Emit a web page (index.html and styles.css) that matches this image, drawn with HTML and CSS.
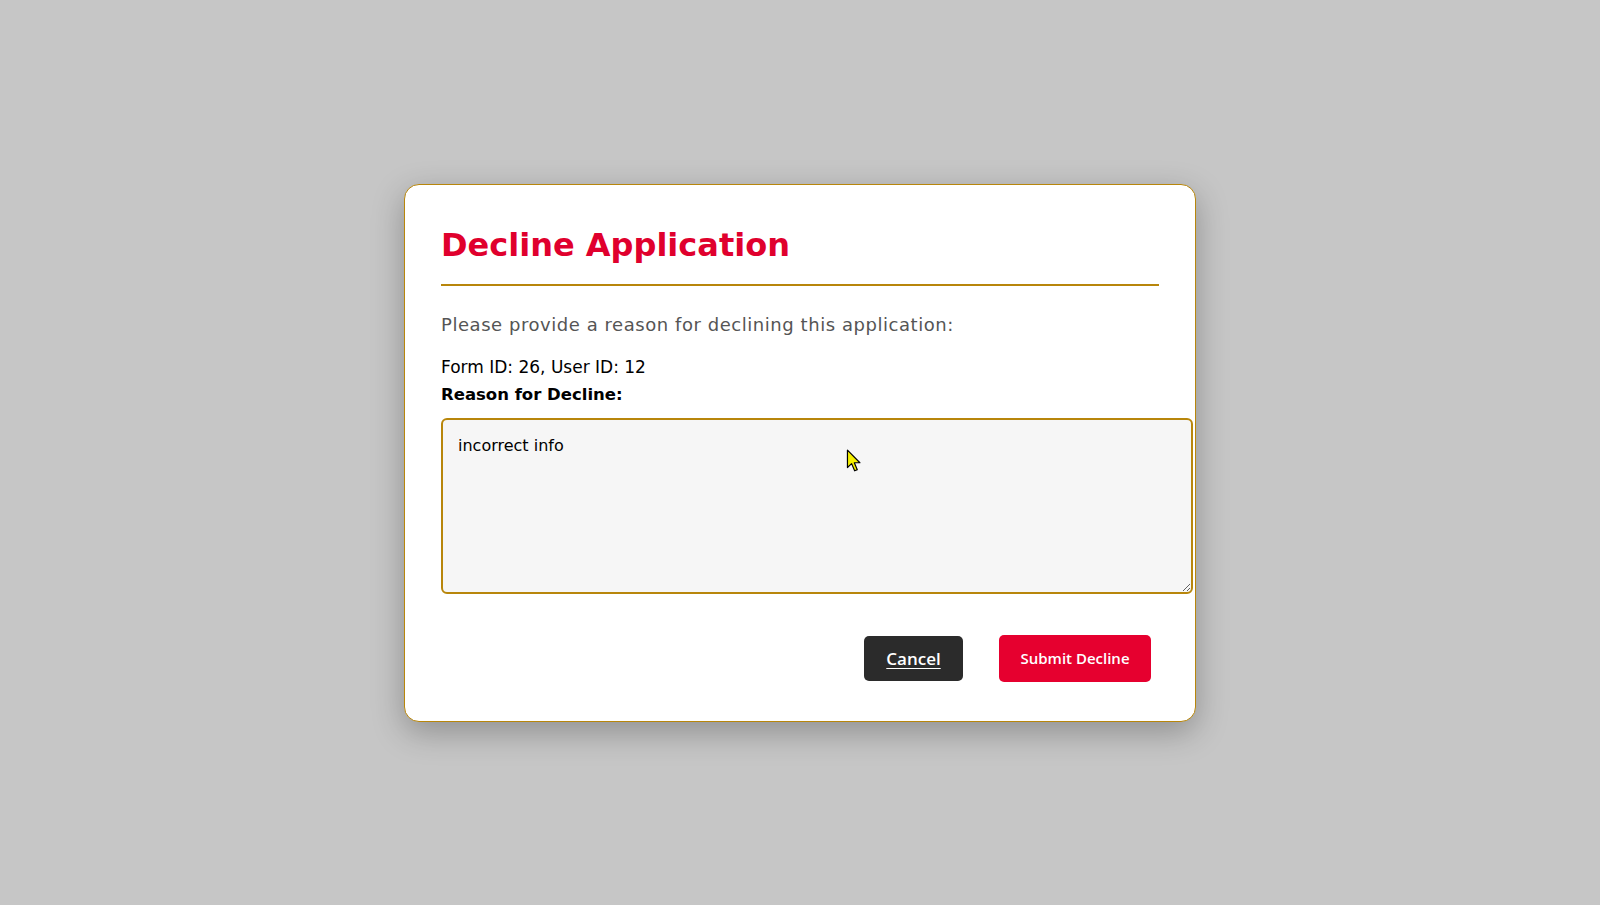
FILE: index.html
```html
<!DOCTYPE html>
<html lang="en">
<head>
<meta charset="utf-8">
<title>Decline Application</title>
<link rel="stylesheet" href="styles.css">
</head>
<body>
<div class="overlay">
  <div class="modal">
    <div class="modal-header">
      <h2 class="modal-title">Decline Application</h2>
    </div>
    <p class="intro">Please provide a reason for declining this application:</p>
    <div class="form-info">Form ID: 26, User ID: 12</div>
    <label class="field-label" for="reason">Reason for Decline:</label>
    <textarea id="reason" class="reason">incorrect info</textarea>
    <div class="actions">
      <a class="btn btn-cancel" href="#">Cancel</a>
      <button class="btn btn-submit" type="button">Submit Decline</button>
    </div>
  </div>
  <svg class="cursor" width="16" height="24" viewBox="0 0 14 22" aria-hidden="true">
    <path d="M1 1 L1 17 L4.8 13.4 L7.6 20 L10 19 L7.3 12.6 L12.4 12.6 Z" fill="#f5f000" stroke="#000" stroke-width="1.1" stroke-linejoin="round"/>
  </svg>
</div>
</body>
</html>
```
FILE: styles.css
```css
* { box-sizing: border-box; }

html, body {
  margin: 0;
  padding: 0;
  height: 100%;
}

body {
  background: #c6c6c6;
  font-family: "DejaVu Sans", "Open Sans", sans-serif;
  color: #000;
}

.overlay {
  position: relative;
  height: 100vh;
  display: flex;
  align-items: center;
  justify-content: center;
}

.modal {
  width: 792px;
  background: #fff;
  border: 1px solid #b8860b;
  border-radius: 15px;
  padding: 36px 36px 39px;
  box-shadow: 0 10px 32px rgba(0, 0, 0, 0.28);
  display: flex;
  flex-direction: column;
}

.modal-header {
  border-bottom: 2px solid #b8860b;
  padding-bottom: 15px;
}

.modal-title {
  margin: 0;
  font-size: 32px;
  line-height: 48px;
  font-weight: 700;
  color: #e0002d;
}

.intro {
  margin: 25px 0 0;
  font-size: 18px;
  line-height: 28px;
  color: #555;
  letter-spacing: 0.55px;
}

.form-info {
  margin-top: 15px;
  font-size: 17px;
  line-height: 27px;
  color: #000;
}

.field-label {
  display: block;
  font-size: 16.5px;
  line-height: 27px;
  font-weight: 700;
  color: #000;
}

.reason {
  display: block;
  box-sizing: content-box;
  width: 100%;
  height: 142px;
  margin-top: 10px;
  padding: 15px;
  border: 2px solid #b8860b;
  border-radius: 6px;
  background: #f6f6f6;
  font-family: "DejaVu Sans", "Open Sans", sans-serif;
  font-size: 16px;
  line-height: 22px;
  color: #000;
  outline: none;
}

.actions {
  margin-top: 41px;
  display: flex;
  justify-content: flex-end;
  align-items: center;
  gap: 36px;
  padding-right: 8px;
}

.btn {
  display: flex;
  align-items: center;
  justify-content: center;
  border: none;
  border-radius: 5px;
  color: #fff;
  cursor: pointer;
  padding: 0;
}

.btn-cancel {
  width: 99px;
  height: 45px;
  background: #2b2b2b;
  font-family: "Open Sans", sans-serif;
  font-size: 17px;
  font-weight: 600;
  text-decoration: underline;
  text-underline-offset: 3px;
}

.btn-submit {
  width: 152px;
  height: 47px;
  background: #e6002f;
  font-family: "Open Sans", sans-serif;
  font-size: 15px;
  font-weight: 600;
}

.cursor {
  position: absolute;
  left: 846px;
  top: 449px;
}
```
